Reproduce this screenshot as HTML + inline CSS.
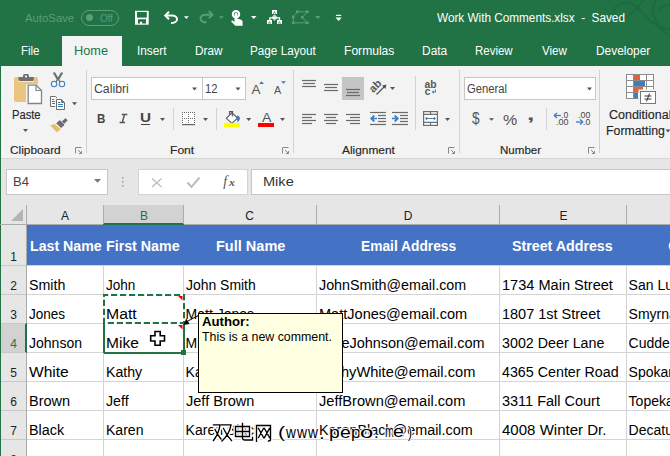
<!DOCTYPE html>
<html><head><meta charset="utf-8"><style>
html,body{margin:0;padding:0}
body{width:670px;height:456px;overflow:hidden;position:relative;background:#fff;font-family:"Liberation Sans",sans-serif}
.r{position:absolute;box-sizing:content-box}
.t{position:absolute;white-space:pre;line-height:1}
</style></head><body>
<div class="r" style="left:0px;top:0px;width:670px;height:66px;background:#217346;"></div>
<div class="r" style="left:62px;top:36px;width:60px;height:30px;background:#f3f3f3;"></div>
<svg class="r" style="left:590px;top:0" width="80" height="36"><g transform="translate(-590 0)" fill="none" stroke="#1d6a3f" stroke-width="1.8"><path d="M644 0 C 636 8, 630 17, 623 19 C 615 21, 611 14, 615 8 C 619 2, 630 1, 637 7 C 645 14, 650 26, 670 30"/><path d="M656 0 C 650 10, 652 24, 670 36"/><path d="M658 11 C 662 6, 666 5, 670 5"/></g></svg>
<div class="t" style="left:24.50px;top:13.47px;font-size:11.5px;color:#5e9c77;transform:scaleX(0.9860);transform-origin:0 0;">AutoSave</div>
<div class="r" style="left:81px;top:10px;width:36px;height:14px;border:1px solid #5e9c77;border-radius:8px"></div>
<div class="r" style="left:85.5px;top:14px;width:7px;height:7px;border-radius:50%;background:#5e9c77"></div>
<div class="t" style="left:100.00px;top:13.41px;font-size:10.5px;color:#5e9c77;transform:scaleX(0.9286);transform-origin:0 0;">Off</div>
<div class="t" style="left:436.80px;top:11.40px;font-size:13px;color:#fff;transform:scaleX(0.9043);transform-origin:0 0;">Work With Comments.xlsx&nbsp;&nbsp;-&nbsp;&nbsp;Saved</div>
<div class="t" style="left:20.78px;top:44.92px;font-size:12.5px;color:#fff;transform:scaleX(0.9158);transform-origin:0 0;">File</div>
<div class="t" style="left:136.56px;top:44.92px;font-size:12.5px;color:#fff;transform:scaleX(0.9433);transform-origin:0 0;">Insert</div>
<div class="t" style="left:194.76px;top:44.92px;font-size:12.5px;color:#fff;transform:scaleX(0.9393);transform-origin:0 0;">Draw</div>
<div class="t" style="left:250.06px;top:44.92px;font-size:12.5px;color:#fff;transform:scaleX(0.9377);transform-origin:0 0;">Page Layout</div>
<div class="t" style="left:344.23px;top:44.92px;font-size:12.5px;color:#fff;transform:scaleX(0.9667);transform-origin:0 0;">Formulas</div>
<div class="t" style="left:421.94px;top:44.92px;font-size:12.5px;color:#fff;transform:scaleX(0.9560);transform-origin:0 0;">Data</div>
<div class="t" style="left:475.08px;top:44.92px;font-size:12.5px;color:#fff;transform:scaleX(0.9175);transform-origin:0 0;">Review</div>
<div class="t" style="left:542.00px;top:44.92px;font-size:12.5px;color:#fff;transform:scaleX(0.9259);transform-origin:0 0;">View</div>
<div class="t" style="left:595.55px;top:44.92px;font-size:12.5px;color:#fff;transform:scaleX(0.9518);transform-origin:0 0;">Developer</div>
<div class="t" style="left:74.48px;top:44.92px;font-size:12.5px;color:#217346;transform:scaleX(1.0187);transform-origin:0 0;">Home</div>
<div class="r" style="left:0px;top:66px;width:670px;height:92px;background:#f3f3f3;"></div>
<div class="r" style="left:0px;top:158px;width:670px;height:1px;background:#d5d5d5;"></div>
<div class="r" style="left:0px;top:159px;width:670px;height:46px;background:#e6e6e6;"></div>
<div class="r" style="left:0px;top:66px;width:1px;height:390px;background:#217346;"></div>

<svg class="r" style="left:0;top:0" width="345" height="36">
 <rect x="135" y="10.8" width="13.7" height="13.9" fill="#fff"/>
 <rect x="137" y="12" width="9.8" height="5.6" fill="#217346"/>
 <path d="M138 19.2 H146 V23.4 H142.1 V21.8 H140 V23.4 H138z" fill="#217346"/>
 <path d="M165.5 15.5 H172 A5 3.7 0 0 1 172 22.9 H171" fill="none" stroke="#fff" stroke-width="2"/>
 <path d="M169 11.8 L165.3 15.5 L169 19.2" fill="none" stroke="#fff" stroke-width="2"/>
 <path d="M184 16.3 h4.8 l-2.4 2.7z" fill="#fff"/>
 <path d="M212.5 14.7 H205.5 A5 3.8 0 0 0 205.5 22.3 H206.5" fill="none" stroke="#5e9c77" stroke-width="2"/>
 <path d="M208.8 11 L212.5 14.7 L208.8 18.4" fill="none" stroke="#5e9c77" stroke-width="2"/>
 <path d="M219 16.3 h4.8 l-2.4 2.7z" fill="#5e9c77"/>
 <circle cx="236" cy="14.3" r="3.2" fill="none" stroke="#fff" stroke-width="2.1"/>
 <g fill="#fff"><rect x="234.6" y="13" width="2.9" height="8" rx="1.4"/><path d="M234.6 19 H239 L241 19.8 Q242.6 20.4 242.6 22 V25.8 H235.3 L231 21.2 L232.3 20.2 L234.6 22z"/></g>
 <path d="M251 16 h5.5 l-2.75 3z" fill="#fff"/>
 <g fill="#fff"><rect x="272" y="10" width="5" height="4"/><rect x="267" y="20" width="5" height="4"/><rect x="277" y="20" width="5" height="4"/></g>
 <path d="M269.8 20 V17.8 H279.5 V20" fill="none" stroke="#fff" stroke-width="1.3"/>
 <path d="M274.5 14.3 L277.7 17.6 L274.5 20.9 L271.3 17.6z" fill="#fff" opacity="0.75"/>
 <g fill="#217346"><rect x="274" y="11.5" width="1" height="1"/><rect x="273.2" y="12.6" width="1" height="1"/><rect x="274.8" y="12.6" width="1" height="1"/>
 <rect x="269" y="21.5" width="1" height="1"/><rect x="268.2" y="22.6" width="1" height="1"/><rect x="269.8" y="22.6" width="1" height="1"/>
 <rect x="279" y="21.5" width="1" height="1"/><rect x="278.2" y="22.6" width="1" height="1"/><rect x="279.8" y="22.6" width="1" height="1"/></g>
 <g fill="#5e9c77"><rect x="296" y="10.5" width="2.6" height="2.6"/><rect x="306" y="10.5" width="2.6" height="2.6"/><rect x="292" y="15.5" width="2.6" height="2.6"/><rect x="301" y="16" width="2.6" height="2.6"/><rect x="292" y="21.5" width="2.6" height="2.6"/><rect x="306" y="21.5" width="2.6" height="2.6"/></g>
 <path d="M298.5 11.8 H306 M306.5 13 L303 16.5 M303 18.5 L306.5 21.8 M294.5 22.8 H306 M293.3 18 V21.5 M294 15.5 L296.5 13" stroke="#5e9c77" stroke-width="1"/>
 <path d="M315 16 h5.5 l-2.75 3z" fill="#5e9c77"/>
 <rect x="336" y="14.8" width="5.2" height="1.2" fill="#fff"/><path d="M335.5 17.6 h6.2 l-3.1 3.4z" fill="#fff"/>
</svg>
<div class="r" style="left:91px;top:77px;width:110px;height:21px;background:#fff;border:1px solid #c6c6c6"></div>
<div class="r" style="left:202px;top:77px;width:42px;height:21px;background:#fff;border:1px solid #c6c6c6"></div>
<div class="r" style="left:464px;top:77px;width:130px;height:21px;background:#fff;border:1px solid #c6c6c6"></div>

<svg class="r" style="left:0;top:0" width="670" height="160">
 <!-- separators -->
 <g fill="#d2d2d2">
  <rect x="86" y="70" width="1" height="83"/><rect x="293" y="70" width="1" height="83"/>
  <rect x="459" y="70" width="1" height="83"/><rect x="599" y="70" width="1" height="83"/>
  <rect x="173" y="108" width="1" height="22"/><rect x="216" y="108" width="1" height="22"/>
  <rect x="415" y="76" width="1" height="54"/><rect x="546" y="108" width="1" height="22"/>
 </g>
 <!-- paste -->
 <rect x="14" y="77" width="24" height="25" rx="2" fill="#ebc57f"/>
 <path d="M23 78 V75.5 Q23 74 24.5 74 H27.5 Q29 74 29 75.5 V78z" fill="#707070"/>
 <path d="M18.5 77 H33.8 V79.2 Q33.8 81 32 81 H20.3 Q18.5 81 18.5 79.2z" fill="#707070"/>
 <rect x="18.5" y="81" width="15.3" height="1" fill="#f3f3f3" opacity="0.8"/>
 <circle cx="26" cy="76.5" r="1.1" fill="#fff"/>
 <path d="M26 84 h11 l6 6 v15 h-17z" fill="#f3f3f3"/>
 <path d="M28.2 85.2 h8 l5.3 5.3 v13 h-13.3z" fill="#fff" stroke="#858585" stroke-width="1.3"/>
 <path d="M36 85.2 v5.3 h5.5" fill="none" stroke="#858585" stroke-width="1.2"/>
 <path d="M23 129 h5 l-2.5 3z" fill="#555"/>
 <!-- scissors -->
 <path d="M52.8 72.8 L55 72.2 L58 77.5 L61 72.2 L63.2 72.8 L59.3 79.5 L60.8 82 L59.5 82.5 L58 80 L56.5 82.5 L55.2 82 L56.7 79.5z" fill="#6d6d6d"/>
 <circle cx="54" cy="84" r="2.7" fill="#f3f3f3" stroke="#3f7cc2" stroke-width="1.05"/>
 <circle cx="62" cy="84" r="2.7" fill="#f3f3f3" stroke="#3f7cc2" stroke-width="1.05"/>
 <!-- copy -->
 <path d="M50.5 96.5 H55.5 L57.5 98.5 V106.5 H50.5z" fill="#fff" stroke="#6d6d6d" stroke-width="1"/>
 <g fill="#3f78bd"><rect x="52" y="99" width="2.2" height="1"/><rect x="52" y="101" width="3" height="1"/><rect x="52" y="103" width="3" height="1"/></g>
 <path d="M56.5 99.5 H61.5 L64.5 102.5 V109.5 H56.5z" fill="#fff" stroke="#f3f3f3" stroke-width="3"/>
 <path d="M56.5 99.5 H61.5 L64.5 102.5 V109.5 H56.5z" fill="#fff" stroke="#6d6d6d" stroke-width="1"/>
 <path d="M61.5 99.5 V102.5 H64.5" fill="#888" stroke="#6d6d6d" stroke-width="1"/>
 <g fill="#3f78bd"><rect x="58" y="102" width="2.2" height="1"/><rect x="58" y="104" width="5" height="1"/><rect x="58" y="106" width="5" height="1"/></g>
 <path d="M72 102.2 h5 l-2.5 3z" fill="#555"/>
 <!-- format painter -->
 <path d="M50.2 125.4 L54.5 123.9 L60.8 129 L56.9 132.6z" fill="#e9bb6b"/>
 <path d="M56.2 123.3 L59.3 120.6 Q60 120 60.7 120.7 L64 124.2 Q64.6 124.9 64 125.5 L61 128z" fill="#6d6d6d"/>
 <path d="M61.8 121.4 L65 118.6 Q65.6 118.1 66.2 118.7 L67.3 119.9 Q67.8 120.5 67.2 121 L64.2 123.8z" fill="#6d6d6d"/>
 <!-- dialog launchers -->
 <g fill="none" stroke="#8a8a8a" stroke-width="1">
  <path d="M75.5 153.5 v-6 h6"/><path d="M78 150 l3.5 3.5 M81.5 151 v2.5 h-2.5"/>
  <path d="M282.5 153.5 v-6 h6"/><path d="M285 150 l3.5 3.5 M288.5 151 v2.5 h-2.5"/>
  <path d="M448.5 153.5 v-6 h6"/><path d="M451 150 l3.5 3.5 M454.5 151 v2.5 h-2.5"/>
  <path d="M588.5 153.5 v-6 h6"/><path d="M591 150 l3.5 3.5 M594.5 151 v2.5 h-2.5"/>
 </g>
 <!-- font dropdown arrows -->
 <path d="M192 87.5 h5 l-2.5 3z" fill="#555"/> <path d="M235.5 87.5 h5 l-2.5 3z" fill="#555"/> <path d="M587 87.5 h5 l-2.5 3z" fill="#555"/>
 <!-- grow/shrink A -->
 <path d="M259 84 l2.5 -2.7 l2.5 2.7z" fill="#3f7cc2"/>
 <path d="M281 81.3 h5 l-2.5 2.5z" fill="#3f7cc2"/>
 <!-- underline dropdown etc -->
 <path d="M160 118 h5 l-2.5 3z" fill="#555"/> <path d="M203 118 h5 l-2.5 3z" fill="#555"/> <path d="M246.2 118 h5 l-2.5 3z" fill="#555"/> <path d="M280 118 h5 l-2.5 3z" fill="#555"/>
 <!-- borders icon -->
 <rect x="182" y="112" width="13" height="12" fill="#fff"/>
 <g fill="#666">
  <rect x="182" y="112" width="1" height="1"/><rect x="182" y="118" width="1" height="1"/><rect x="184" y="112" width="1" height="1"/><rect x="184" y="118" width="1" height="1"/><rect x="186" y="112" width="1" height="1"/><rect x="186" y="118" width="1" height="1"/><rect x="188" y="112" width="1" height="1"/><rect x="188" y="118" width="1" height="1"/><rect x="190" y="112" width="1" height="1"/><rect x="190" y="118" width="1" height="1"/><rect x="192" y="112" width="1" height="1"/><rect x="192" y="118" width="1" height="1"/><rect x="194" y="112" width="1" height="1"/><rect x="194" y="118" width="1" height="1"/>
  <rect x="182" y="114" width="1" height="1"/><rect x="182" y="116" width="1" height="1"/><rect x="182" y="120" width="1" height="1"/><rect x="182" y="122" width="1" height="1"/><rect x="188" y="114" width="1" height="1"/><rect x="188" y="116" width="1" height="1"/><rect x="188" y="120" width="1" height="1"/><rect x="188" y="122" width="1" height="1"/><rect x="194" y="114" width="1" height="1"/><rect x="194" y="116" width="1" height="1"/><rect x="194" y="120" width="1" height="1"/><rect x="194" y="122" width="1" height="1"/>
  <rect x="182" y="124" width="13" height="1.2"/>
 </g>
 <!-- fill bucket -->
 <path d="M226.3 118.3 L231.8 112.8 L237.6 118.1 L232 123.3z" fill="#fff" stroke="#555" stroke-width="1.1"/>
 <path d="M229.5 114.2 V111.6 H232.6 V113.5" fill="none" stroke="#555" stroke-width="1.1"/>
 <path d="M232.3 112.5 V116.5" stroke="#555" stroke-width="1.1"/>
 <path d="M237.4 115.3 Q241 117 239.5 120 Q238.5 121.6 237.3 122.2 Q237.8 120 236.2 118.5z" fill="#3f78bd"/>
 <rect x="224" y="123" width="16" height="4" fill="#ffff00"/>
 <rect x="258" y="123" width="16" height="4" fill="#ff0000"/>
 <!-- alignment lines -->
 <line x1="302" y1="80.5" x2="316" y2="80.5" stroke="#6a6a6a" stroke-width="1.2"/><line x1="303" y1="83.5" x2="315" y2="83.5" stroke="#6a6a6a" stroke-width="1.2"/><line x1="302" y1="86.5" x2="316" y2="86.5" stroke="#6a6a6a" stroke-width="1.2"/>
 <line x1="324" y1="84.5" x2="338" y2="84.5" stroke="#6a6a6a" stroke-width="1.2"/><line x1="325" y1="87.5" x2="337" y2="87.5" stroke="#6a6a6a" stroke-width="1.2"/><line x1="324" y1="90.5" x2="338" y2="90.5" stroke="#6a6a6a" stroke-width="1.2"/>
 <rect x="342" y="77" width="22" height="23" fill="#c5c5c5"/>
 <line x1="346" y1="89.5" x2="360" y2="89.5" stroke="#6a6a6a" stroke-width="1.2"/><line x1="347" y1="92.5" x2="359" y2="92.5" stroke="#6a6a6a" stroke-width="1.2"/><line x1="346" y1="95.5" x2="360" y2="95.5" stroke="#6a6a6a" stroke-width="1.2"/>
 <line x1="302" y1="114.5" x2="316" y2="114.5" stroke="#6a6a6a" stroke-width="1.2"/><line x1="302" y1="117.5" x2="312" y2="117.5" stroke="#6a6a6a" stroke-width="1.2"/><line x1="302" y1="120.5" x2="316" y2="120.5" stroke="#6a6a6a" stroke-width="1.2"/><line x1="302" y1="123.5" x2="312" y2="123.5" stroke="#6a6a6a" stroke-width="1.2"/>
 <line x1="324" y1="114.5" x2="338" y2="114.5" stroke="#6a6a6a" stroke-width="1.2"/><line x1="326" y1="117.5" x2="336" y2="117.5" stroke="#6a6a6a" stroke-width="1.2"/><line x1="324" y1="120.5" x2="338" y2="120.5" stroke="#6a6a6a" stroke-width="1.2"/><line x1="326" y1="123.5" x2="336" y2="123.5" stroke="#6a6a6a" stroke-width="1.2"/>
 <line x1="346" y1="114.5" x2="360" y2="114.5" stroke="#6a6a6a" stroke-width="1.2"/><line x1="350" y1="117.5" x2="360" y2="117.5" stroke="#6a6a6a" stroke-width="1.2"/><line x1="346" y1="120.5" x2="360" y2="120.5" stroke="#6a6a6a" stroke-width="1.2"/><line x1="350" y1="123.5" x2="360" y2="123.5" stroke="#6a6a6a" stroke-width="1.2"/>
 <!-- orientation -->
 <text x="0" y="0" transform="translate(373.2 93.2) rotate(-45)" font-family="Liberation Sans" font-weight="700" font-size="11" fill="#555">ab</text>
 <path d="M376.5 94.5 L385.5 85.5" stroke="#555" stroke-width="1.2"/>
 <path d="M386.5 84.5 l-1 4.5 l-3.5 -3.5z" fill="#555"/>
 <path d="M390 87 h5 l-2.5 3z" fill="#555"/>
 <!-- indent -->
 <line x1="370" y1="112.5" x2="386" y2="112.5" stroke="#6a6a6a" stroke-width="1.2"/><line x1="378" y1="115.5" x2="386" y2="115.5" stroke="#6a6a6a" stroke-width="1.2"/><line x1="378" y1="118.5" x2="386" y2="118.5" stroke="#6a6a6a" stroke-width="1.2"/><line x1="378" y1="121.5" x2="386" y2="121.5" stroke="#6a6a6a" stroke-width="1.2"/><line x1="370" y1="124.5" x2="386" y2="124.5" stroke="#6a6a6a" stroke-width="1.2"/>
 <line x1="392" y1="112.5" x2="408" y2="112.5" stroke="#6a6a6a" stroke-width="1.2"/><line x1="400" y1="115.5" x2="408" y2="115.5" stroke="#6a6a6a" stroke-width="1.2"/><line x1="400" y1="118.5" x2="408" y2="118.5" stroke="#6a6a6a" stroke-width="1.2"/><line x1="400" y1="121.5" x2="408" y2="121.5" stroke="#6a6a6a" stroke-width="1.2"/><line x1="392" y1="124.5" x2="408" y2="124.5" stroke="#6a6a6a" stroke-width="1.2"/>
 <path d="M370 118.5 L373.5 115 L375 116 L373.5 117.7 H377 V119.3 H373.5 L375 121 L373.5 122z" fill="#3f7cc2"/>
 <path d="M399 118.5 L395.5 115 L394 116 L395.5 117.7 H392 V119.3 H395.5 L394 121 L395.5 122z" fill="#3f7cc2"/>
 <!-- wrap text -->
 <text x="424.6" y="87.6" font-family="Liberation Sans" font-weight="700" font-size="10" fill="#555" textLength="12" lengthAdjust="spacingAndGlyphs">ab</text>
 <text x="424.8" y="95" font-family="Liberation Sans" font-weight="700" font-size="10" fill="#555">c</text>
 <path d="M435.5 89.5 v2.5 h-3" fill="none" stroke="#3f7cc2" stroke-width="1"/>
 <path d="M431.8 92 l2 -1.8 v3.6z" fill="#3f7cc2"/>
 <!-- merge -->
 <rect x="423.6" y="111.6" width="13.8" height="13.8" fill="#fff"/>
 <g fill="none" stroke="#6d6d6d" stroke-width="1.2">
  <rect x="423.6" y="111.6" width="13.8" height="13.8"/>
  <path d="M423.6 114.4 h13.8 M423.6 122.4 h13.8 M430.5 111.6 v2.8 M430.5 122.4 v3"/>
 </g>
 <path d="M426 118.5 h9" stroke="#3f7cc2" stroke-width="1"/>
 <path d="M425 118.5 l2.2 -2 v4z M436 118.5 l-2.2 -2 v4z" fill="#3f7cc2"/>
 <path d="M445 118 h5 l-2.5 3z" fill="#555"/>
 <!-- number -->
 <path d="M489 118.3 h5 l-2.5 2.5z" fill="#555"/>
 <!-- decimal arrows -->
 <path d="M554.5 115.5 h6.5" stroke="#3f7cc2" stroke-width="1.3"/><path d="M554 115.5 l3 -2.5 M554 115.5 l3 2.5" stroke="#3f7cc2" stroke-width="1.3" fill="none"/>
 <path d="M576 122 h6.5" stroke="#3f7cc2" stroke-width="1.3"/><path d="M583 122 l-3 -2.5 M583 122 l-3 2.5" stroke="#3f7cc2" stroke-width="1.3" fill="none"/>
 <!-- CF icon -->
 <rect x="626.5" y="74.5" width="27" height="24" fill="#fff"/>
 <rect x="633.5" y="75" width="6.5" height="5.3" fill="#e2603a"/>
 <rect x="633.5" y="81" width="11.5" height="5.5" fill="#3f7cc2"/>
 <rect x="633.5" y="87" width="9.5" height="5.5" fill="#e2603a"/>
 <rect x="633.5" y="93" width="4.5" height="5.5" fill="#3f7cc2"/>
 <g fill="none" stroke="#8c8c8c" stroke-width="1">
  <rect x="626.5" y="74.5" width="27" height="24"/>
  <path d="M626.5 80.5 h27 M626.5 86.5 h27 M626.5 92.5 h27 M633.5 74.5 v24 M646.5 74.5 v24"/>
 </g>
 <rect x="638.5" y="89.5" width="19" height="15" fill="#f3f3f3"/>
 <rect x="640.5" y="91.5" width="15" height="12" fill="#fff" stroke="#777" stroke-width="1"/>
 <path d="M644.5 96 h7 M644.5 99 h7 M649.5 93.5 l-3 8" stroke="#333" stroke-width="1"/>
</svg>

<div class="t" style="left:11.61px;top:108.62px;font-size:12.5px;color:#262626;transform:scaleX(0.8935);transform-origin:0 0;-webkit-text-stroke:0.15px #262626;">Paste</div>
<div class="t" style="left:9.57px;top:145.37px;font-size:11.5px;color:#262626;transform:scaleX(1.0292);transform-origin:0 0;-webkit-text-stroke:0.15px #262626;">Clipboard</div>
<div class="t" style="left:169.55px;top:145.37px;font-size:11.5px;color:#262626;transform:scaleX(1.0500);transform-origin:0 0;-webkit-text-stroke:0.15px #262626;">Font</div>
<div class="t" style="left:342.10px;top:145.37px;font-size:11.5px;color:#262626;transform:scaleX(1.0333);transform-origin:0 0;-webkit-text-stroke:0.15px #262626;">Alignment</div>
<div class="t" style="left:500.39px;top:145.37px;font-size:11.5px;color:#262626;transform:scaleX(1.0050);transform-origin:0 0;-webkit-text-stroke:0.15px #262626;">Number</div>
<div class="t" style="left:608.60px;top:109.02px;font-size:12.5px;color:#262626;transform:scaleX(0.9984);transform-origin:0 0;-webkit-text-stroke:0.15px #262626;">Conditional</div>
<div class="t" style="left:605.81px;top:124.92px;font-size:12.5px;color:#262626;transform:scaleX(0.9862);transform-origin:0 0;-webkit-text-stroke:0.15px #262626;">Formatting</div>
<svg class="r" style="left:665px;top:129px" width="6" height="5"><path d="M0.5 0.5 h5 l-2.5 3z" fill="#555"/></svg>
<div class="t" style="left:93.52px;top:82.72px;font-size:12.5px;color:#444;transform:scaleX(0.9824);transform-origin:0 0;">Calibri</div>
<div class="t" style="left:204.80px;top:82.72px;font-size:12.5px;color:#444;transform:scaleX(0.9000);transform-origin:0 0;">12</div>
<div class="t" style="left:466.90px;top:82.72px;font-size:12.5px;color:#444;transform:scaleX(0.9000);transform-origin:0 0;">General</div>
<div class="t" style="left:96.78px;top:112.52px;font-size:12.5px;color:#444;font-weight:700;transform:scaleX(0.9250);transform-origin:0 0;">B</div>
<svg class="r" style="left:0;top:0" width="140" height="130"><path d="M121.8 114.6 H127.3 M119.6 122.6 H125.1 M124.4 114.6 L122.3 122.6" stroke="#555" stroke-width="1.5" fill="none"/></svg>
<div class="t" style="left:139.73px;top:112.44px;font-size:12px;color:#444;font-weight:700;transform:scaleX(1.2714);transform-origin:0 0;">U</div>
<div class="r" style="left:141px;top:123.8px;width:9px;height:1.2px;background:#444;"></div>
<div class="t" style="left:251.50px;top:82.57px;font-size:13.5px;color:#555;">A</div>
<div class="t" style="left:274.40px;top:85.11px;font-size:10.5px;color:#555;transform:scaleX(1.0286);transform-origin:0 0;">A</div>
<div class="t" style="left:261.70px;top:111.17px;font-size:13.5px;color:#555;transform:scaleX(1.0444);transform-origin:0 0;">A</div>
<div class="t" style="left:471.70px;top:110.66px;font-size:16px;color:#555;transform:scaleX(0.8556);transform-origin:0 0;">$</div>
<div class="t" style="left:502.57px;top:112.18px;font-size:15.5px;color:#555;transform:scaleX(1.0333);transform-origin:0 0;">%</div>
<div class="t" style="left:526.63px;top:106.11px;font-size:17px;color:#555;font-weight:700;transform:scaleX(1.5667);transform-origin:0 0;">,</div>
<div class="t" style="left:560.90px;top:109.96px;font-size:9.5px;color:#444;transform:scaleX(0.9000);transform-origin:0 0;">.0</div>
<div class="t" style="left:555.86px;top:116.76px;font-size:9.5px;color:#444;transform:scaleX(0.9417);transform-origin:0 0;">.00</div>
<div class="t" style="left:578.07px;top:109.96px;font-size:9.5px;color:#444;transform:scaleX(0.9333);transform-origin:0 0;">.00</div>
<div class="t" style="left:582.89px;top:116.76px;font-size:9.5px;color:#444;transform:scaleX(0.9143);transform-origin:0 0;">.0</div>
<div class="r" style="left:6px;top:169px;width:100px;height:24px;background:#fff;border:1px solid #c6c6c6"></div>
<div class="r" style="left:138px;top:169px;width:108px;height:24px;background:#fff;border:1px solid #d4d4d4"></div>
<div class="r" style="left:251px;top:169px;width:430px;height:24px;background:#fff;border:1px solid #c6c6c6"></div>
<svg class="r" style="left:0;top:160px" width="260" height="40">
<path d="M94 19 h7 l-3.5 3.7z" fill="#777"/>
<g fill="#999"><rect x="122" y="17" width="1.5" height="1.5"/><rect x="122" y="21" width="1.5" height="1.5"/><rect x="122" y="25" width="1.5" height="1.5"/></g>
<path d="M152 18.5 L161.5 27 M161.5 18.5 L152 27" stroke="#bdbdbd" stroke-width="1.3"/>
<path d="M187.5 22.5 L191.5 27 L199.5 17.5" fill="none" stroke="#bdbdbd" stroke-width="2"/>
</svg>
<div class="t" style="left:223.20px;top:174.65px;font-size:14px;color:#555;font-family:'Liberation Serif';font-style:italic;">f</div>
<div class="t" style="left:228.80px;top:178.03px;font-size:10px;color:#555;font-weight:700;font-family:'Liberation Serif';font-style:italic;transform:scaleX(1.1800);transform-origin:0 0;">x</div>
<div class="t" style="left:12.56px;top:176.12px;font-size:12.5px;color:#444;transform:scaleX(1.0429);transform-origin:0 0;">B4</div>
<div class="t" style="left:262.74px;top:176.22px;font-size:12.5px;color:#333;transform:scaleX(1.1640);transform-origin:0 0;">Mike</div>
<div class="r" style="left:1px;top:205px;width:669px;height:19px;background:#e6e6e6;"></div>
<div class="r" style="left:0px;top:224px;width:670px;height:1px;background:#ababab;"></div>
<div class="r" style="left:103px;top:205px;width:80px;height:18px;background:#d2d2d2;"></div>
<div class="r" style="left:103px;top:223px;width:81px;height:2px;background:#217346;"></div>
<div class="r" style="left:26px;top:205px;width:1px;height:19px;background:#ababab;"></div>
<div class="r" style="left:103px;top:205px;width:1px;height:19px;background:#ababab;"></div>
<div class="r" style="left:183px;top:205px;width:1px;height:19px;background:#ababab;"></div>
<div class="r" style="left:316px;top:205px;width:1px;height:19px;background:#ababab;"></div>
<div class="r" style="left:499px;top:205px;width:1px;height:19px;background:#ababab;"></div>
<div class="r" style="left:626px;top:205px;width:1px;height:19px;background:#ababab;"></div>
<div class="r" style="left:1px;top:225px;width:25px;height:231px;background:#e6e6e6;"></div>
<div class="r" style="left:26px;top:205px;width:1px;height:251px;background:#ababab;"></div>
<div class="r" style="left:1px;top:323px;width:25px;height:29px;background:#d2d2d2;"></div>
<div class="r" style="left:25px;top:323px;width:2px;height:30px;background:#217346;"></div>
<svg class="r" style="left:11px;top:209px" width="13" height="13"><path d="M12 0 V12 H0z" fill="#b4b4b4"/></svg>
<div class="r" style="left:1px;top:265px;width:25px;height:1px;background:#c8c8c8;"></div>
<div class="r" style="left:1px;top:294px;width:25px;height:1px;background:#c8c8c8;"></div>
<div class="r" style="left:1px;top:323px;width:25px;height:1px;background:#c8c8c8;"></div>
<div class="r" style="left:1px;top:352px;width:25px;height:1px;background:#c8c8c8;"></div>
<div class="r" style="left:1px;top:381px;width:25px;height:1px;background:#c8c8c8;"></div>
<div class="r" style="left:1px;top:410px;width:25px;height:1px;background:#c8c8c8;"></div>
<div class="r" style="left:1px;top:439px;width:25px;height:1px;background:#c8c8c8;"></div>
<div class="r" style="left:27px;top:265px;width:643px;height:1px;background:#d4d4d4;"></div>
<div class="r" style="left:27px;top:294px;width:643px;height:1px;background:#d4d4d4;"></div>
<div class="r" style="left:27px;top:323px;width:643px;height:1px;background:#d4d4d4;"></div>
<div class="r" style="left:27px;top:352px;width:643px;height:1px;background:#d4d4d4;"></div>
<div class="r" style="left:27px;top:381px;width:643px;height:1px;background:#d4d4d4;"></div>
<div class="r" style="left:27px;top:410px;width:643px;height:1px;background:#d4d4d4;"></div>
<div class="r" style="left:27px;top:439px;width:643px;height:1px;background:#d4d4d4;"></div>
<div class="r" style="left:103px;top:265px;width:1px;height:191px;background:#d4d4d4;"></div>
<div class="r" style="left:183px;top:265px;width:1px;height:191px;background:#d4d4d4;"></div>
<div class="r" style="left:316px;top:265px;width:1px;height:191px;background:#d4d4d4;"></div>
<div class="r" style="left:499px;top:265px;width:1px;height:191px;background:#d4d4d4;"></div>
<div class="r" style="left:626px;top:265px;width:1px;height:191px;background:#d4d4d4;"></div>
<div class="r" style="left:27px;top:225px;width:643px;height:40px;background:#4472c4;"></div>
<div class="t" style="left:45px;width:40px;text-align:center;top:209.54px;font-size:12px;color:#222">A</div>
<div class="t" style="left:124px;width:40px;text-align:center;top:209.54px;font-size:12px;color:#217346">B</div>
<div class="t" style="left:229.5px;width:40px;text-align:center;top:209.54px;font-size:12px;color:#222">C</div>
<div class="t" style="left:388px;width:40px;text-align:center;top:209.54px;font-size:12px;color:#222">D</div>
<div class="t" style="left:543.5px;width:40px;text-align:center;top:209.54px;font-size:12px;color:#222">E</div>
<div class="t" style="left:1px;width:25px;text-align:center;top:251.34px;font-size:12px;color:#222">1</div>
<div class="t" style="left:1px;width:25px;text-align:center;top:280.24px;font-size:12px;color:#222">2</div>
<div class="t" style="left:1px;width:25px;text-align:center;top:309.24px;font-size:12px;color:#222">3</div>
<div class="t" style="left:1px;width:25px;text-align:center;top:338.24px;font-size:12px;color:#217346">4</div>
<div class="t" style="left:1px;width:25px;text-align:center;top:367.24px;font-size:12px;color:#222">5</div>
<div class="t" style="left:1px;width:25px;text-align:center;top:396.24px;font-size:12px;color:#222">6</div>
<div class="t" style="left:1px;width:25px;text-align:center;top:425.24px;font-size:12px;color:#222">7</div>
<div class="t" style="left:1px;width:25px;text-align:center;top:454.24px;font-size:12px;color:#222">8</div>
<div class="t" style="left:29.89px;top:239.15px;font-size:14px;color:#fff;font-weight:700;transform:scaleX(1.0116);transform-origin:0 0;">Last Name</div>
<div class="t" style="left:106.28px;top:239.15px;font-size:14px;color:#fff;font-weight:700;transform:scaleX(1.0169);transform-origin:0 0;">First Name</div>
<div class="t" style="left:215.56px;top:239.15px;font-size:14px;color:#fff;font-weight:700;transform:scaleX(1.0369);transform-origin:0 0;">Full Name</div>
<div class="t" style="left:361.02px;top:239.15px;font-size:14px;color:#fff;font-weight:700;transform:scaleX(0.9832);transform-origin:0 0;">Email Address</div>
<div class="t" style="left:512.28px;top:239.15px;font-size:14px;color:#fff;font-weight:700;transform:scaleX(1.0163);transform-origin:0 0;">Street Address</div>
<div class="t" style="left:668.20px;top:239.15px;font-size:14px;color:#fff;font-weight:700;">C</div>
<div class="t" style="left:28.60px;top:277.75px;font-size:14px;color:#000;transform:scaleX(1.0171);transform-origin:0 0;">Smith</div>
<div class="t" style="left:105.60px;top:277.75px;font-size:14px;color:#000;transform:scaleX(0.9667);transform-origin:0 0;">John</div>
<div class="t" style="left:185.60px;top:277.75px;font-size:14px;color:#000;transform:scaleX(0.9957);transform-origin:0 0;">John Smith</div>
<div class="t" style="left:318.60px;top:277.75px;font-size:14px;color:#000;transform:scaleX(1.0210);transform-origin:0 0;">JohnSmith@email.com</div>
<div class="t" style="left:501.60px;top:277.75px;font-size:14px;color:#000;transform:scaleX(1.0402);transform-origin:0 0;">1734 Main Street</div>
<div class="t" style="left:628.60px;top:277.75px;font-size:14px;color:#000;">San Luis</div>
<div class="t" style="left:28.60px;top:306.75px;font-size:14px;color:#000;transform:scaleX(0.9676);transform-origin:0 0;">Jones</div>
<div class="t" style="left:105.60px;top:306.75px;font-size:14px;color:#000;transform:scaleX(1.1259);transform-origin:0 0;">Matt</div>
<div class="t" style="left:185.60px;top:306.75px;font-size:14px;color:#000;">Matt Jones</div>
<div class="t" style="left:318.60px;top:306.75px;font-size:14px;color:#000;transform:scaleX(1.0387);transform-origin:0 0;">MattJones@email.com</div>
<div class="t" style="left:501.60px;top:306.75px;font-size:14px;color:#000;transform:scaleX(1.0347);transform-origin:0 0;">1807 1st Street</div>
<div class="t" style="left:628.60px;top:306.75px;font-size:14px;color:#000;">Smyrna</div>
<div class="t" style="left:28.60px;top:335.75px;font-size:14px;color:#000;transform:scaleX(1.0019);transform-origin:0 0;">Johnson</div>
<div class="t" style="left:105.60px;top:335.75px;font-size:14px;color:#000;transform:scaleX(1.1103);transform-origin:0 0;">Mike</div>
<div class="t" style="left:185.60px;top:335.75px;font-size:14px;color:#000;">Mike Johnson</div>
<div class="t" style="left:318.60px;top:335.75px;font-size:14px;color:#000;transform:scaleX(1.0319);transform-origin:0 0;">MikeJohnson@email.com</div>
<div class="t" style="left:501.60px;top:335.75px;font-size:14px;color:#000;transform:scaleX(1.0200);transform-origin:0 0;">3002 Deer Lane</div>
<div class="t" style="left:628.60px;top:335.75px;font-size:14px;color:#000;">Cuddeback</div>
<div class="t" style="left:28.60px;top:364.75px;font-size:14px;color:#000;transform:scaleX(1.1114);transform-origin:0 0;">White</div>
<div class="t" style="left:105.60px;top:364.75px;font-size:14px;color:#000;transform:scaleX(1.0111);transform-origin:0 0;">Kathy</div>
<div class="t" style="left:185.60px;top:364.75px;font-size:14px;color:#000;">Kathy White</div>
<div class="t" style="left:318.60px;top:364.75px;font-size:14px;color:#000;transform:scaleX(1.0450);transform-origin:0 0;">KathyWhite@email.com</div>
<div class="t" style="left:501.60px;top:364.75px;font-size:14px;color:#000;transform:scaleX(1.0193);transform-origin:0 0;">4365 Center Road</div>
<div class="t" style="left:628.60px;top:364.75px;font-size:14px;color:#000;">Spokane</div>
<div class="t" style="left:28.60px;top:393.75px;font-size:14px;color:#000;transform:scaleX(1.0359);transform-origin:0 0;">Brown</div>
<div class="t" style="left:105.60px;top:393.75px;font-size:14px;color:#000;transform:scaleX(1.0130);transform-origin:0 0;">Jeff</div>
<div class="t" style="left:185.60px;top:393.75px;font-size:14px;color:#000;transform:scaleX(1.0385);transform-origin:0 0;">Jeff Brown</div>
<div class="t" style="left:318.60px;top:393.75px;font-size:14px;color:#000;transform:scaleX(1.0453);transform-origin:0 0;">JeffBrown@email.com</div>
<div class="t" style="left:501.60px;top:393.75px;font-size:14px;color:#000;transform:scaleX(1.0347);transform-origin:0 0;">3311 Fall Court</div>
<div class="t" style="left:628.60px;top:393.75px;font-size:14px;color:#000;">Topeka</div>
<div class="t" style="left:28.60px;top:422.75px;font-size:14px;color:#000;transform:scaleX(1.0265);transform-origin:0 0;">Black</div>
<div class="t" style="left:105.60px;top:422.75px;font-size:14px;color:#000;transform:scaleX(1.0027);transform-origin:0 0;">Karen</div>
<div class="t" style="left:185.60px;top:422.75px;font-size:14px;color:#000;">Karen Black</div>
<div class="t" style="left:318.60px;top:422.75px;font-size:14px;color:#000;transform:scaleX(1.0275);transform-origin:0 0;">KarenBlack@email.com</div>
<div class="t" style="left:501.60px;top:422.75px;font-size:14px;color:#000;transform:scaleX(1.0740);transform-origin:0 0;">4008 Winter Dr.</div>
<div class="t" style="left:628.60px;top:422.75px;font-size:14px;color:#000;">Decatur</div>
<svg class="r" style="left:0;top:0" width="670" height="456">
 <path d="M104 353 V323 M104 353 H184 M184 323 V353" fill="none" stroke="#217346" stroke-width="2"/>
 <rect x="104" y="295" width="80" height="28" fill="none" stroke="#fff" stroke-width="2"/>
 <rect x="104" y="295" width="80" height="28" fill="none" stroke="#217346" stroke-width="2" stroke-dasharray="6.2 2.8" stroke-dashoffset="2"/>
 <rect x="181" y="350" width="5" height="5" fill="#217346"/>
 <path d="M178 296 H182.5 V300.5z" fill="#e00"/>
 <path d="M178 325 H182.5 V329.5z" fill="#e00"/>
 <line x1="188" y1="321" x2="203" y2="313" stroke="#000" stroke-width="1"/>
 <path d="M183.5 324.9 L189.5 324 L186.3 318.6z" fill="#000"/>
 <path d="M155 331.5 h5.2 v4.3 h4.3 v5.2 h-4.3 v4.3 h-5.2 v-4.3 h-4.3 v-5.2 h4.3z" fill="#fff" stroke="#000" stroke-width="1.6"/>
</svg>
<div class="r" style="left:198px;top:313px;width:143px;height:78px;background:#ffffe1;border:1px solid #000"></div>
<div class="t" style="left:201.90px;top:316.14px;font-size:12px;color:#000;font-weight:700;transform:scaleX(1.0976);transform-origin:0 0;">Author:</div>
<div class="t" style="left:202.40px;top:330.84px;font-size:12px;color:#000;transform:scaleX(1.0312);transform-origin:0 0;">This is a new comment.</div>
<svg class="r" style="left:200px;top:415px" width="90" height="35"><g transform="translate(-200 -415)" fill="none" stroke-linecap="square">
<g stroke="#fff" stroke-width="4.2">
<path d="M213.5 424.8 H220 Q219 433 213.5 440.5 M215 429.5 Q217.5 435 221 439 M221.5 424.8 H231 Q229.5 434 222 441 M223.5 428.5 Q227 436 231.5 440.5"/>
<path d="M235.5 426.5 H249.5 V436.5 H235.5z M235.5 431.5 H249.5 M242.5 423.5 V438 Q242.5 440 245 440 H252.5 V437.5"/>
<path d="M256.5 441.3 V425.5 H270.5 V439.5 Q270.5 441 268.5 441 M258.5 428.5 L263.5 437.5 M263.5 428.5 L258.5 437.5 M264.5 428.5 L269.5 437.5 M269.5 428.5 L264.5 437.5"/>
</g>
<g stroke="#000" stroke-width="1.35">
<path d="M213.5 424.8 H220 Q219 433 213.5 440.5 M215 429.5 Q217.5 435 221 439 M221.5 424.8 H231 Q229.5 434 222 441 M223.5 428.5 Q227 436 231.5 440.5"/>
<path d="M235.5 426.5 H249.5 V436.5 H235.5z M235.5 431.5 H249.5 M242.5 423.5 V438 Q242.5 440 245 440 H252.5 V437.5"/>
<path d="M256.5 441.3 V425.5 H270.5 V439.5 Q270.5 441 268.5 441 M258.5 428.5 L263.5 437.5 M263.5 428.5 L258.5 437.5 M264.5 428.5 L269.5 437.5 M269.5 428.5 L264.5 437.5"/>
</g></g></svg>
<div class="t" style="left:278.38px;top:424.96px;font-size:16px;color:#000;transform:scaleX(1.3250);transform-origin:0 0;text-shadow:0 0 1px #fff,0 0 2px #fff,1px 0 1px #fff,-1px 0 1px #fff,0 1px 1px #fff,0 -1px 1px #fff;">(</div>
<div class="t" style="left:285.70px;top:425.46px;font-size:16px;color:#000;transform:scaleX(0.8583);transform-origin:0 0;text-shadow:0 0 1px #fff,0 0 2px #fff,1px 0 1px #fff,-1px 0 1px #fff,0 1px 1px #fff,0 -1px 1px #fff;">w</div>
<div class="t" style="left:296.50px;top:425.46px;font-size:16px;color:#000;transform:scaleX(0.8750);transform-origin:0 0;text-shadow:0 0 1px #fff,0 0 2px #fff,1px 0 1px #fff,-1px 0 1px #fff,0 1px 1px #fff,0 -1px 1px #fff;">w</div>
<div class="t" style="left:307.50px;top:425.46px;font-size:16px;color:#000;transform:scaleX(0.8583);transform-origin:0 0;text-shadow:0 0 1px #fff,0 0 2px #fff,1px 0 1px #fff,-1px 0 1px #fff,0 1px 1px #fff,0 -1px 1px #fff;">w</div>
<div class="t" style="left:319.10px;top:425.76px;font-size:16px;color:#000;transform:scaleX(1.3000);transform-origin:0 0;text-shadow:0 0 1px #fff,0 0 2px #fff,1px 0 1px #fff,-1px 0 1px #fff,0 1px 1px #fff,0 -1px 1px #fff;">.</div>
<div class="t" style="left:329.49px;top:424.86px;font-size:16px;color:#000;transform:scaleX(1.2143);transform-origin:0 0;text-shadow:0 0 1px #fff,0 0 2px #fff,1px 0 1px #fff,-1px 0 1px #fff,0 1px 1px #fff,0 -1px 1px #fff;">p</div>
<div class="t" style="left:339.79px;top:424.86px;font-size:16px;color:#000;transform:scaleX(1.2143);transform-origin:0 0;text-shadow:0 0 1px #fff,0 0 2px #fff,1px 0 1px #fff,-1px 0 1px #fff,0 1px 1px #fff,0 -1px 1px #fff;">e</div>
<div class="t" style="left:351.11px;top:424.86px;font-size:16px;color:#000;transform:scaleX(1.0857);transform-origin:0 0;text-shadow:0 0 1px #fff,0 0 2px #fff,1px 0 1px #fff,-1px 0 1px #fff,0 1px 1px #fff,0 -1px 1px #fff;">p</div>
<div class="t" style="left:360.11px;top:424.86px;font-size:16px;color:#000;transform:scaleX(1.4857);transform-origin:0 0;text-shadow:0 0 1px #fff,0 0 2px #fff,1px 0 1px #fff,-1px 0 1px #fff,0 1px 1px #fff,0 -1px 1px #fff;">o</div>
<div class="t" style="left:374.35px;top:425.06px;font-size:16px;color:#000;transform:scaleX(1.0500);transform-origin:0 0;text-shadow:0 0 1px #fff,0 0 2px #fff,1px 0 1px #fff,-1px 0 1px #fff,0 1px 1px #fff,0 -1px 1px #fff;">.</div>
<div class="t" style="left:384.83px;top:424.46px;font-size:16px;color:#000;transform:scaleX(0.6667);transform-origin:0 0;text-shadow:0 0 1px #fff,0 0 2px #fff,1px 0 1px #fff,-1px 0 1px #fff,0 1px 1px #fff,0 -1px 1px #fff;">m</div>
<div class="t" style="left:393.29px;top:424.46px;font-size:16px;color:#000;transform:scaleX(1.2143);transform-origin:0 0;text-shadow:0 0 1px #fff,0 0 2px #fff,1px 0 1px #fff,-1px 0 1px #fff,0 1px 1px #fff,0 -1px 1px #fff;">e</div>
<div class="t" style="left:407.90px;top:424.96px;font-size:16px;color:#000;transform:scaleX(0.7400);transform-origin:0 0;text-shadow:0 0 1px #fff,0 0 2px #fff,1px 0 1px #fff,-1px 0 1px #fff,0 1px 1px #fff,0 -1px 1px #fff;">)</div>
</body></html>
